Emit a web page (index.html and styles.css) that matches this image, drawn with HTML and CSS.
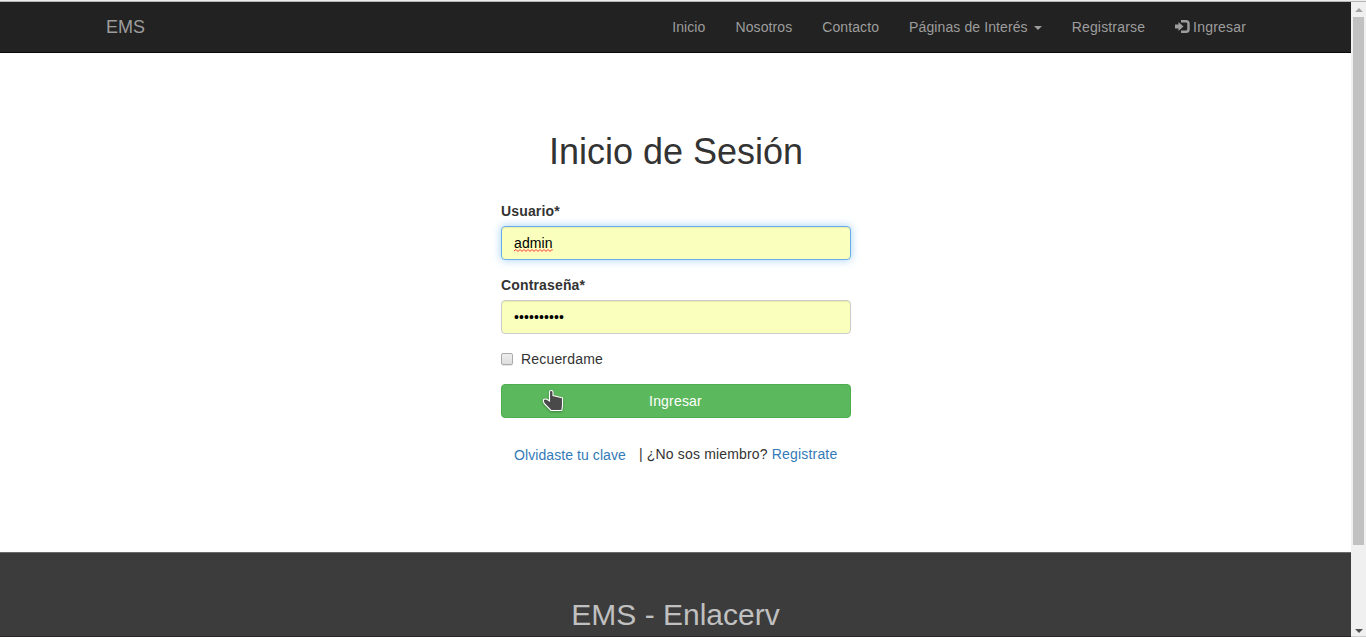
FILE: index.html
```html
<!DOCTYPE html>
<html lang="es">
<head>
<meta charset="utf-8">
<title>EMS - Inicio de Sesión</title>
<link rel="stylesheet" href="styles.css">
</head>
<body>
<div class="window">
  <div class="page">
    <nav class="navbar">
      <div class="container">
        <a class="brand">EMS</a>
        <ul class="menu">
          <li>Inicio</li>
          <li>Nosotros</li>
          <li>Contacto</li>
          <li>Páginas de Interés <span class="caret"></span></li>
          <li class="register">Registrarse</li>
          <li class="enter"><svg class="login-icon" width="15" height="13" viewBox="0 0 15 13"><path d="M0 4.500h3.500V2L8.500 6.500 3.500 11V8.500H0z"/><path d="M6 1.200H11Q13.500 1.200 13.500 3.500V9.500Q13.500 11.800 11 11.800H6" fill="none" stroke="currentColor" stroke-width="2.400"/></svg>Ingresar</li>
        </ul>
      </div>
    </nav>
    <main class="content">
      <h1>Inicio de Sesión</h1>
      <form class="login">
        <label class="label">Usuario*</label>
        <div class="field focused"><span class="misspelled">admin<svg class="squiggle" width="39" height="3" viewBox="0 0 39 3"><path d="M0 2l2-1.5 2 2 2-2 2 2 2-2 2 2 2-2 2 2 2-2 2 2 2-2 2 2 2-2 2 2 2-2 2 2 2-2 2 2 2-2 1 1"/></svg></span></div>
        <label class="label">Contraseña*</label>
        <div class="field">••••••••••</div>
        <label class="remember"><span class="box"></span>Recuerdame</label>
        <div class="submit">Ingresar
          <svg class="pointer" width="22" height="24" viewBox="0 0 22 24"><path d="M7.500 3Q7.500 1.500 9.200 1.500T11 3V6.500L19 8.500 20.500 8.800V17L19.800 21.500H9L2.200 14.500Q1 12 1.500 10.500 3.500 9.500 5.300 10.500L7.500 12z"/></svg>
        </div>
        <div class="links"><a class="forgot">Olvidaste tu clave</a><span class="join">| ¿No sos miembro? <a>Registrate</a></span></div>
      </form>
    </main>
    <footer class="footer"><h2>EMS - Enlacerv</h2></footer>
  </div>
  <div class="scrollbar">
    <svg class="arrow up" width="8" height="4" viewBox="0 0 8 4"><path d="M0 4L4 0l4 4z"/></svg>
    <div class="thumb"></div>
    <svg class="arrow down" width="8" height="4" viewBox="0 0 8 4"><path d="M0 0h8L4 4z"/></svg>
  </div>
</div>
</body>
</html>
```
FILE: styles.css
```css
* { box-sizing: border-box; }
body {
  margin: 0;
  height: 637px;
  overflow: hidden;
  font: 14px/20px "Liberation Sans", Arial, sans-serif;
  color: #333;
  background: #eee;
}
.window {
  display: flex;
  height: 636px;
  margin-top: 1px;
  border-top: 1px solid #b6b6b6;
}
.page { display: flex; flex-direction: column; width: 1351px; background: #fff; }
.navbar { height: 51px; background: #222; border-bottom: 1px solid #080808; }
.container {
  width: 1171px;
  margin: 0 auto;
  padding-left: 16px;
  display: flex;
  justify-content: space-between;
}
.brand { padding: 15px 0; font-size: 18px; color: #9d9d9d; }
.menu { display: flex; margin: 0; padding: 0; list-style: none; color: #9d9d9d; letter-spacing: .1px; }
.menu li { padding: 15px; white-space: nowrap; }
.menu .register { letter-spacing: .17px; }
.menu .enter { letter-spacing: .19px; }
.caret {
  display: inline-block;
  margin-left: 2px;
  vertical-align: middle;
  border: 4px solid transparent;
  border-top-color: #9d9d9d;
  border-bottom: 0;
}
.login-icon { margin-right: 3px; vertical-align: -1px; fill: currentColor; }
.content { height: 499px; padding-top: 79px; }
h1 { margin: 0 0 29px; padding-left: 1px; font-size: 36px; font-weight: 500; line-height: 40px; text-align: center; }
.login { width: 350px; margin: 0 0 0 501px; }
.label { display: block; margin-bottom: 5px; font-weight: 700; letter-spacing: .15px; }
.field {
  height: 34px;
  margin-bottom: 15px;
  padding: 6px 12px;
  border: 1px solid #ccc;
  border-radius: 4px;
  background: #faffbd;
  box-shadow: inset 0 1px 1px rgba(0,0,0,.075);
  color: #000;
  letter-spacing: .1px;
}
.focused {
  border-color: #66afe9;
  box-shadow: inset 0 1px 1px rgba(0,0,0,.075), 0 0 8px rgba(102,175,233,.6);
}
.misspelled { position: relative; }
.squiggle { position: absolute; left: 0; bottom: -1px; fill: none; stroke: #f33; stroke-width: 1; }
.remember { display: flex; align-items: center; gap: 8px; margin-bottom: 15px; letter-spacing: .18px; }
.box {
  width: 12px;
  height: 12px;
  border: 1px solid #aaa;
  border-radius: 2px;
  background: linear-gradient(#ededed, #dedede);
  box-shadow: 0 1px 1px rgba(0,0,0,.1);
}
.submit {
  position: relative;
  height: 34px;
  padding: 6px 13px 6px 12px;
  border: 1px solid #4cae4c;
  border-radius: 4px;
  background: #5cb85c;
  color: #fff;
  text-align: center;
  letter-spacing: .19px;
}
.pointer {
  position: absolute;
  left: 40px;
  top: 4px;
  fill: #4a4a4a;
  stroke: #fff;
  stroke-width: 1.1;
  filter: drop-shadow(0 1px 1px rgba(0,0,0,.3));
}
.links { display: flex; margin-top: 20px; white-space: nowrap; }
.links a { color: #337ab7; }
.forgot { padding: 7px 13px; letter-spacing: .08px; }
.join { padding-top: 6px; letter-spacing: .17px; }
.footer { flex: 1; overflow: hidden; padding-top: 45px; border-top: 1px solid #6b6b6b; border-bottom: 1px solid #2b2728; background: #3c3c3c; }
h2 { margin: 0; font-size: 30px; font-weight: 500; line-height: 33px; text-align: center; color: #c0c0c0; }
.scrollbar {
  display: flex;
  flex-direction: column;
  align-items: center;
  width: 15px;
  background: #f0f0f0;
  border-bottom: 1px solid #ccc;
}
.up { margin: 6px 0 5px; fill: #a3a3a3; }
.thumb { width: 11px; height: 528px; background: #c1c1c1; }
.down { margin-top: auto; margin-bottom: 3px; fill: #505050; }
```
